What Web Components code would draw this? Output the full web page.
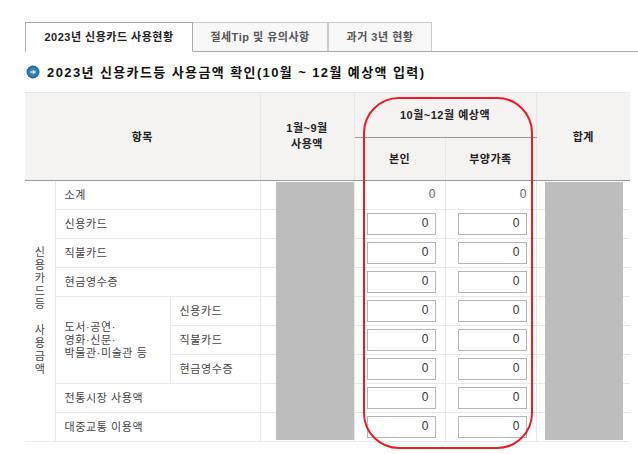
<!DOCTYPE html>
<html lang="ko">
<head>
<meta charset="utf-8">
<title>신용카드 사용현황</title>
<style>
  html, body { margin: 0; background: #fff; }
  body { font: 11px "Liberation Sans", "Noto Sans CJK KR", sans-serif; color: #333; width: 638px; height: 454px; overflow: hidden; }
</style>
</head>
<body>
<tab-bar>
  <tab-item active>2023년 신용카드 사용현황</tab-item>
  <tab-item style="width:135px;border-left:0">절세Tip 및 유의사항</tab-item>
  <tab-item style="width:104px">과거 3년 현황</tab-item>
</tab-bar>
<section-heading>2023년 신용카드등 사용금액 확인(10월 ~ 12월 예상액 입력)</section-heading>
<usage-table></usage-table>

<script>
(function() {
  class TabBar extends HTMLElement {
    constructor() {
      super();
      this.attachShadow({ mode: 'open' }).innerHTML = `
        <style>
          :host { display: flex; height: 30px; margin-top: 22px; padding-left: 25px; box-sizing: border-box; }
          :host::after { content: ''; flex: 1; border-bottom: 1px solid #aaa; }
        </style>
        <slot></slot>
      `;
    }
  }

  class TabItem extends HTMLElement {
    constructor() {
      super();
      this.attachShadow({ mode: 'open' }).innerHTML = `
        <style>
          :host { display: flex; align-items: center; justify-content: center; box-sizing: border-box; height: 30px;
            border: 1px solid #ccc; border-bottom-color: #aaa; background: #f8f8f8; color: #555; font-weight: bold; font-size: 11px; letter-spacing: .5px; padding-bottom: 2px; }
          :host([active]) { background: #fff; color: #222; border-color: #aaa; border-bottom-color: #fff; width: 168px; }
        </style>
        <slot></slot>
      `;
    }
  }

  class SectionHeading extends HTMLElement {
    constructor() {
      super();
      this.attachShadow({ mode: 'open' }).innerHTML = `
        <style>
          :host { display: flex; align-items: center; gap: 7px; height: 20px; margin: 10px 0 10px 25px; font-size: 13px; font-weight: bold; color: #111; letter-spacing: 1.4px; white-space: nowrap; }
          svg { flex: none; margin-left: 1px; }
          span { padding-bottom: 2px; }
        </style>
        <svg width="14" height="14" viewBox="0 0 14 14">
          <defs>
            <radialGradient id="dot"><stop offset="0" stop-color="#5d9fce"/><stop offset="1" stop-color="#15659f"/></radialGradient>
          </defs>
          <circle cx="7" cy="7" r="6.5" fill="url(#dot)"/>
          <path d="M4.2 6.4h2.8V5L9.8 7 7 9V7.6H4.2z" fill="#fff"/>
        </svg>
        <span><slot></slot></span>
      `;
    }
  }

  class AmountBox extends HTMLElement {
    constructor() {
      super();
      this.attachShadow({ mode: 'open' }).innerHTML = `
        <style>
          :host { display: block; box-sizing: border-box; width: 69px; height: 22px; margin: 0 0 0 12px; line-height: 18px; text-align: right;
            padding-right: 6px; border: 1px solid #b5b5b5; background: #fff; color: #333; font-size: 12px; letter-spacing: 0; }
        </style>
        <slot></slot>
      `;
    }
  }

  const usageTemplate = document.createElement('template');
  usageTemplate.innerHTML = `
    <style>
      :host { display: block; position: relative; width: 605px; margin-left: 25px; }
      table { border-collapse: collapse; table-layout: fixed; width: 605px; border-top: 1px solid #111; }
      th, td { padding: 0; border: 1px solid #e8e8e8; font-weight: normal; }
      tr > :first-child { border-left: 0; }
      tr > :last-child { border-right: 0; }
      thead th { background: #f4f3f2; font-weight: bold; color: #222; line-height: 16px; text-align: center; letter-spacing: .5px; }
      thead tr:first-child { height: 45px; }
      thead tr:last-child { height: 43px; }
      thead th.low, thead tr:last-child th { border-bottom: 1px solid #999; }
      tbody tr { height: 29px; }
      td { color: #444; padding: 0 0 2px 9px; letter-spacing: .6px; }
      td.val { padding: 0; }
      td.sum { padding: 0 9px 2px 0; text-align: right; color: #666; font-size: 12px; letter-spacing: 0; }
      td.vert { padding: 0; text-align: center; line-height: 13px; letter-spacing: 0; }
      td.multi { padding: 0 0 0 9px; line-height: 13px; }
      .mask { position: absolute; top: 90px; width: 78px; height: 258px; background: #bdbdbd; }
      .ring { position: absolute; left: 338px; top: 5px; width: 170px; height: 352px; box-sizing: border-box; border: 2px solid #ed1c24; border-radius: 36px; pointer-events: none; }
    </style>
    <table>
      <colgroup>
        <col style="width:30px"><col style="width:115px"><col style="width:90px"><col style="width:94px">
        <col style="width:91px"><col style="width:91px"><col style="width:94px">
      </colgroup>
      <thead>
        <tr>
          <th colspan="3" rowspan="2" class="low" style="padding-top:1px">항목</th>
          <th rowspan="2" class="low" style="padding-bottom:2px">1월~9월<br>사용액</th>
          <th colspan="2" class="low" style="padding-bottom:1px">10월~12월 예상액</th>
          <th rowspan="2" class="low" style="padding-top:1px">합계</th>
        </tr>
        <tr><th>본인</th><th>부양가족</th></tr>
      </thead>
      <tbody></tbody>
    </table>
    <div class="mask" style="left:251px"></div>
    <div class="mask" style="left:520px"></div>
    <div class="ring"></div>
  `;

  const box = '<td class="val"><amount-box>0</amount-box></td>';
  const blank = '<td></td>';
  const inputs = box + box + blank;

  class UsageTable extends HTMLElement {
    constructor() {
      super();
      this.attachShadow({ mode: 'open' });
      this.shadowRoot.appendChild(usageTemplate.content.cloneNode(true));
      const vert = '신<br>용<br>카<br>드<br>등<br><br>사<br>용<br>금<br>액';
      this.shadowRoot.querySelector('tbody').innerHTML = `
        <tr>
          <td class="vert" rowspan="9">${vert}</td>
          <td colspan="2">소계</td>${blank}
          <td class="sum">0</td><td class="sum">0</td>${blank}
        </tr>
        <tr><td colspan="2">신용카드</td>${blank}${inputs}</tr>
        <tr><td colspan="2">직불카드</td>${blank}${inputs}</tr>
        <tr><td colspan="2">현금영수증</td>${blank}${inputs}</tr>
        <tr>
          <td rowspan="3" class="multi">도서·공연·<br>영화·신문·<br>박물관·미술관 등</td>
          <td>신용카드</td>${blank}${inputs}
        </tr>
        <tr><td>직불카드</td>${blank}${inputs}</tr>
        <tr><td>현금영수증</td>${blank}${inputs}</tr>
        <tr><td colspan="2">전통시장 사용액</td>${blank}${inputs}</tr>
        <tr><td colspan="2">대중교통 이용액</td>${blank}${inputs}</tr>
      `;
    }
  }

  customElements.define('tab-bar', TabBar);
  customElements.define('tab-item', TabItem);
  customElements.define('section-heading', SectionHeading);
  customElements.define('amount-box', AmountBox);
  customElements.define('usage-table', UsageTable);
})();
</script>
</body>
</html>
